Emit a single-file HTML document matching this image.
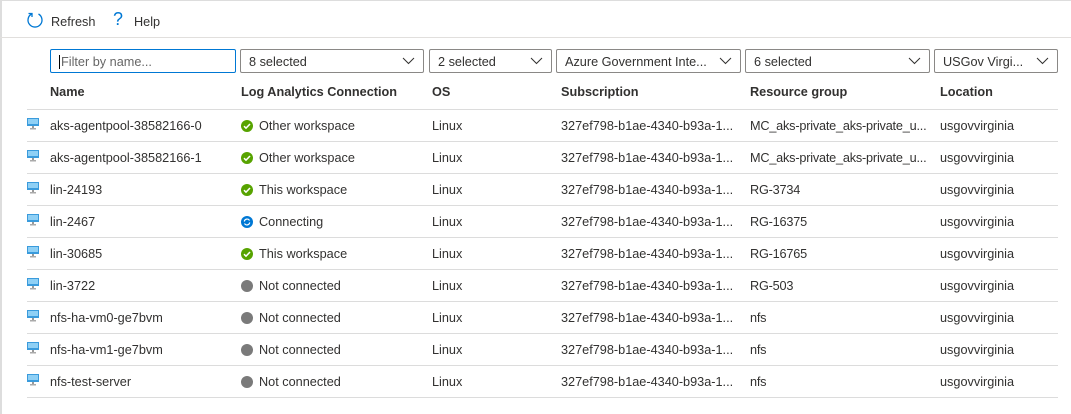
<!DOCTYPE html><html><head><style>
body{margin:0;width:1071px;height:414px;background:#fff;font-family:"Segoe UI","Liberation Sans",sans-serif;font-size:12.7px;color:#323130;position:relative;overflow:hidden}
.a{position:absolute;white-space:nowrap}
.box{position:absolute;border:1px solid #8a8886;box-sizing:border-box;top:49px;height:24px;padding:4px 8px 2px;font-size:12.7px;line-height:16px;border-radius:2px}
.box svg{position:absolute;right:8px;top:7px}
.hl{position:absolute;left:27px;width:1031px;height:1px;background:#dcdcdc}
.h{font-weight:600;top:85px}
</style></head><body>
<div class="a" style="left:0;top:0;width:1071px;height:1px;background:#ddd"></div>
<div class="a" style="left:0;top:0;width:2px;height:414px;background:#ddd"></div>
<div class="a" style="left:0;top:37px;width:1071px;height:1px;background:#e1dfdd"></div>
<svg class="a" style="left:26px;top:11px" width="18" height="18" viewBox="0 0 18 18"><path d="M12.5 3A7 7 0 1 1 5.5 3" fill="none" stroke="#0078d4" stroke-width="1.3"/><path d="M2.5 2.5H6V6" fill="none" stroke="#0078d4" stroke-width="1.3"/></svg>
<div class="a" style="left:51px;top:15px">Refresh</div>
<div class="a" style="left:113px;top:9px;color:#0078d4;font-size:18px;font-weight:300">?</div>
<div class="a" style="left:134px;top:15px">Help</div>
<div class="box" style="left:50px;width:186px;border-color:#0078d4;color:#666"><span style="border-left:1px solid #000;padding-left:1px">Filter by name...</span></div>
<div class="box" style="left:240px;width:184px">8 selected<svg width="13" height="8"><path d="M1 1l5.5 5.5L12 1" fill="none" stroke="#323130"/></svg></div>
<div class="box" style="left:429px;width:123px">2 selected<svg width="13" height="8"><path d="M1 1l5.5 5.5L12 1" fill="none" stroke="#323130"/></svg></div>
<div class="box" style="left:556px;width:185px">Azure Government Inte...<svg width="13" height="8"><path d="M1 1l5.5 5.5L12 1" fill="none" stroke="#323130"/></svg></div>
<div class="box" style="left:745px;width:185px">6 selected<svg width="13" height="8"><path d="M1 1l5.5 5.5L12 1" fill="none" stroke="#323130"/></svg></div>
<div class="box" style="left:934px;width:124px">USGov Virgi...<svg width="13" height="8"><path d="M1 1l5.5 5.5L12 1" fill="none" stroke="#323130"/></svg></div>
<div class="a h" style="left:50px">Name</div><div class="a h" style="left:241px">Log Analytics Connection</div><div class="a h" style="left:432px">OS</div><div class="a h" style="left:561px">Subscription</div><div class="a h" style="left:750px">Resource group</div><div class="a h" style="left:940px">Location</div>
<div id="rows"></div>
<script>
var r=[["aks-agentpool-38582166-0","g","Other workspace","MC_aks-private_aks-private_u..."],["aks-agentpool-38582166-1","g","Other workspace","MC_aks-private_aks-private_u..."],["lin-24193","g","This workspace","RG-3734"],["lin-2467","b","Connecting","RG-16375"],["lin-30685","g","This workspace","RG-16765"],["lin-3722","n","Not connected","RG-503"],["nfs-ha-vm0-ge7bvm","n","Not connected","nfs"],["nfs-ha-vm1-ge7bvm","n","Not connected","nfs"],["nfs-test-server","n","Not connected","nfs"]];
var h='';r.forEach(function(x,i){var y=109+32*i;h+='<div class="hl" style="top:'+y+'px"></div>';var t=y+10;
h+='<svg class="a" style="left:27px;top:'+(t-1)+'px" width="12" height="12" viewBox="0 0 12 12"><rect x="0" y="0" width="12" height="8" fill="#3a9bdc"/><rect x="1" y="1" width="10" height="5" fill="#8fd0f5"/><rect x="5" y="8" width="2" height="2" fill="#999"/><rect x="3" y="10" width="6" height="1.5" fill="#aaa"/></svg>';
h+='<div class="a" style="left:50px;top:'+t+'px">'+x[0]+'</div>';
var ic=x[1]=='g'?'<circle cx="6" cy="6" r="6" fill="#57a300"/><path d="M3 6.2l2 2 4-4.2" fill="none" stroke="#fff" stroke-width="1.5"/>':x[1]=='b'?'<circle cx="6" cy="6" r="6" fill="#0078d4"/><path d="M3.3 5.5A2.8 2.8 0 0 1 8.5 4.5M8.7 6.5A2.8 2.8 0 0 1 3.5 7.5" fill="none" stroke="#fff" stroke-width="1.2"/>':'<circle cx="6" cy="6" r="6" fill="#7a7a7a"/>';
h+='<svg class="a" style="left:241px;top:'+(t+1)+'px" width="12" height="12">'+ic+'</svg>';
h+='<div class="a" style="left:259px;top:'+t+'px">'+x[2]+'</div><div class="a" style="left:432px;top:'+t+'px">Linux</div><div class="a" style="left:561px;top:'+t+'px">327ef798-b1ae-4340-b93a-1...</div><div class="a" style="left:750px;top:'+t+'px;letter-spacing:-0.2px">'+x[3]+'</div><div class="a" style="left:940px;top:'+t+'px">usgovvirginia</div>';});
h+='<div class="hl" style="top:397px"></div>';document.getElementById('rows').innerHTML=h;
</script>
</body></html>
